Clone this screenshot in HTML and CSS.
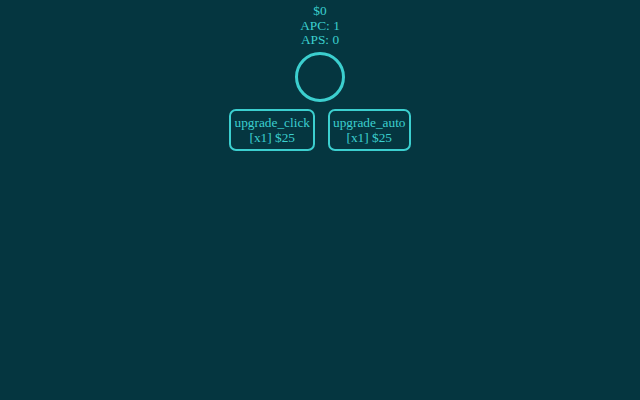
FILE: index.html
```html
<!DOCTYPE html>
<html lang="en">
<head>
    <meta charset="UTF-8">
    <meta name="viewport" content="width=device-width, initial-scale=1.0">
    <title>Clicker</title>
    <link rel="stylesheet" href="styles.css">
</head>
<body>
    <div class="game">
        <div class="stats">
            <p id="money">$0</p>
            <p id="apc">APC: 1</p>
            <p id="aps">APS: 0</p>
        </div>
        <button class="clicker" id="clicker"></button>
        <div class="upgrades">
            <button class="upgrade" id="upgrade_click">upgrade_click<br>[x1] $25</button>
            <button class="upgrade" id="upgrade_auto">upgrade_auto<br>[x1] $25</button>
        </div>
    </div>
</body>
</html>
```

FILE: styles.css
```css
body {
    font-family: "Liberation Serif", "Times New Roman", serif;
    font-size: 13.33px;
    background-color: #053640;
    color: #3ccfcf;
    text-align: center;
    margin: 0;
    padding-top: 4px;
}
.stats p {
    margin: 0;
    line-height: 14.5px;
}
.clicker {
    display: block;
    width: 50px;
    height: 50px;
    margin: 4px auto 0;
    border: 3px solid #3ccfcf;
    border-radius: 50%;
    background: transparent;
    cursor: pointer;
}
.upgrades {
    display: flex;
    justify-content: center;
    gap: 13px;
    margin-top: 7px;
}
.upgrade {
    font-family: inherit;
    font-size: 13.33px;
    line-height: 15px;
    color: #3ccfcf;
    background: transparent;
    border: 2px solid #3ccfcf;
    border-radius: 7px;
    padding: 4px 3px;
    cursor: pointer;
}
```
